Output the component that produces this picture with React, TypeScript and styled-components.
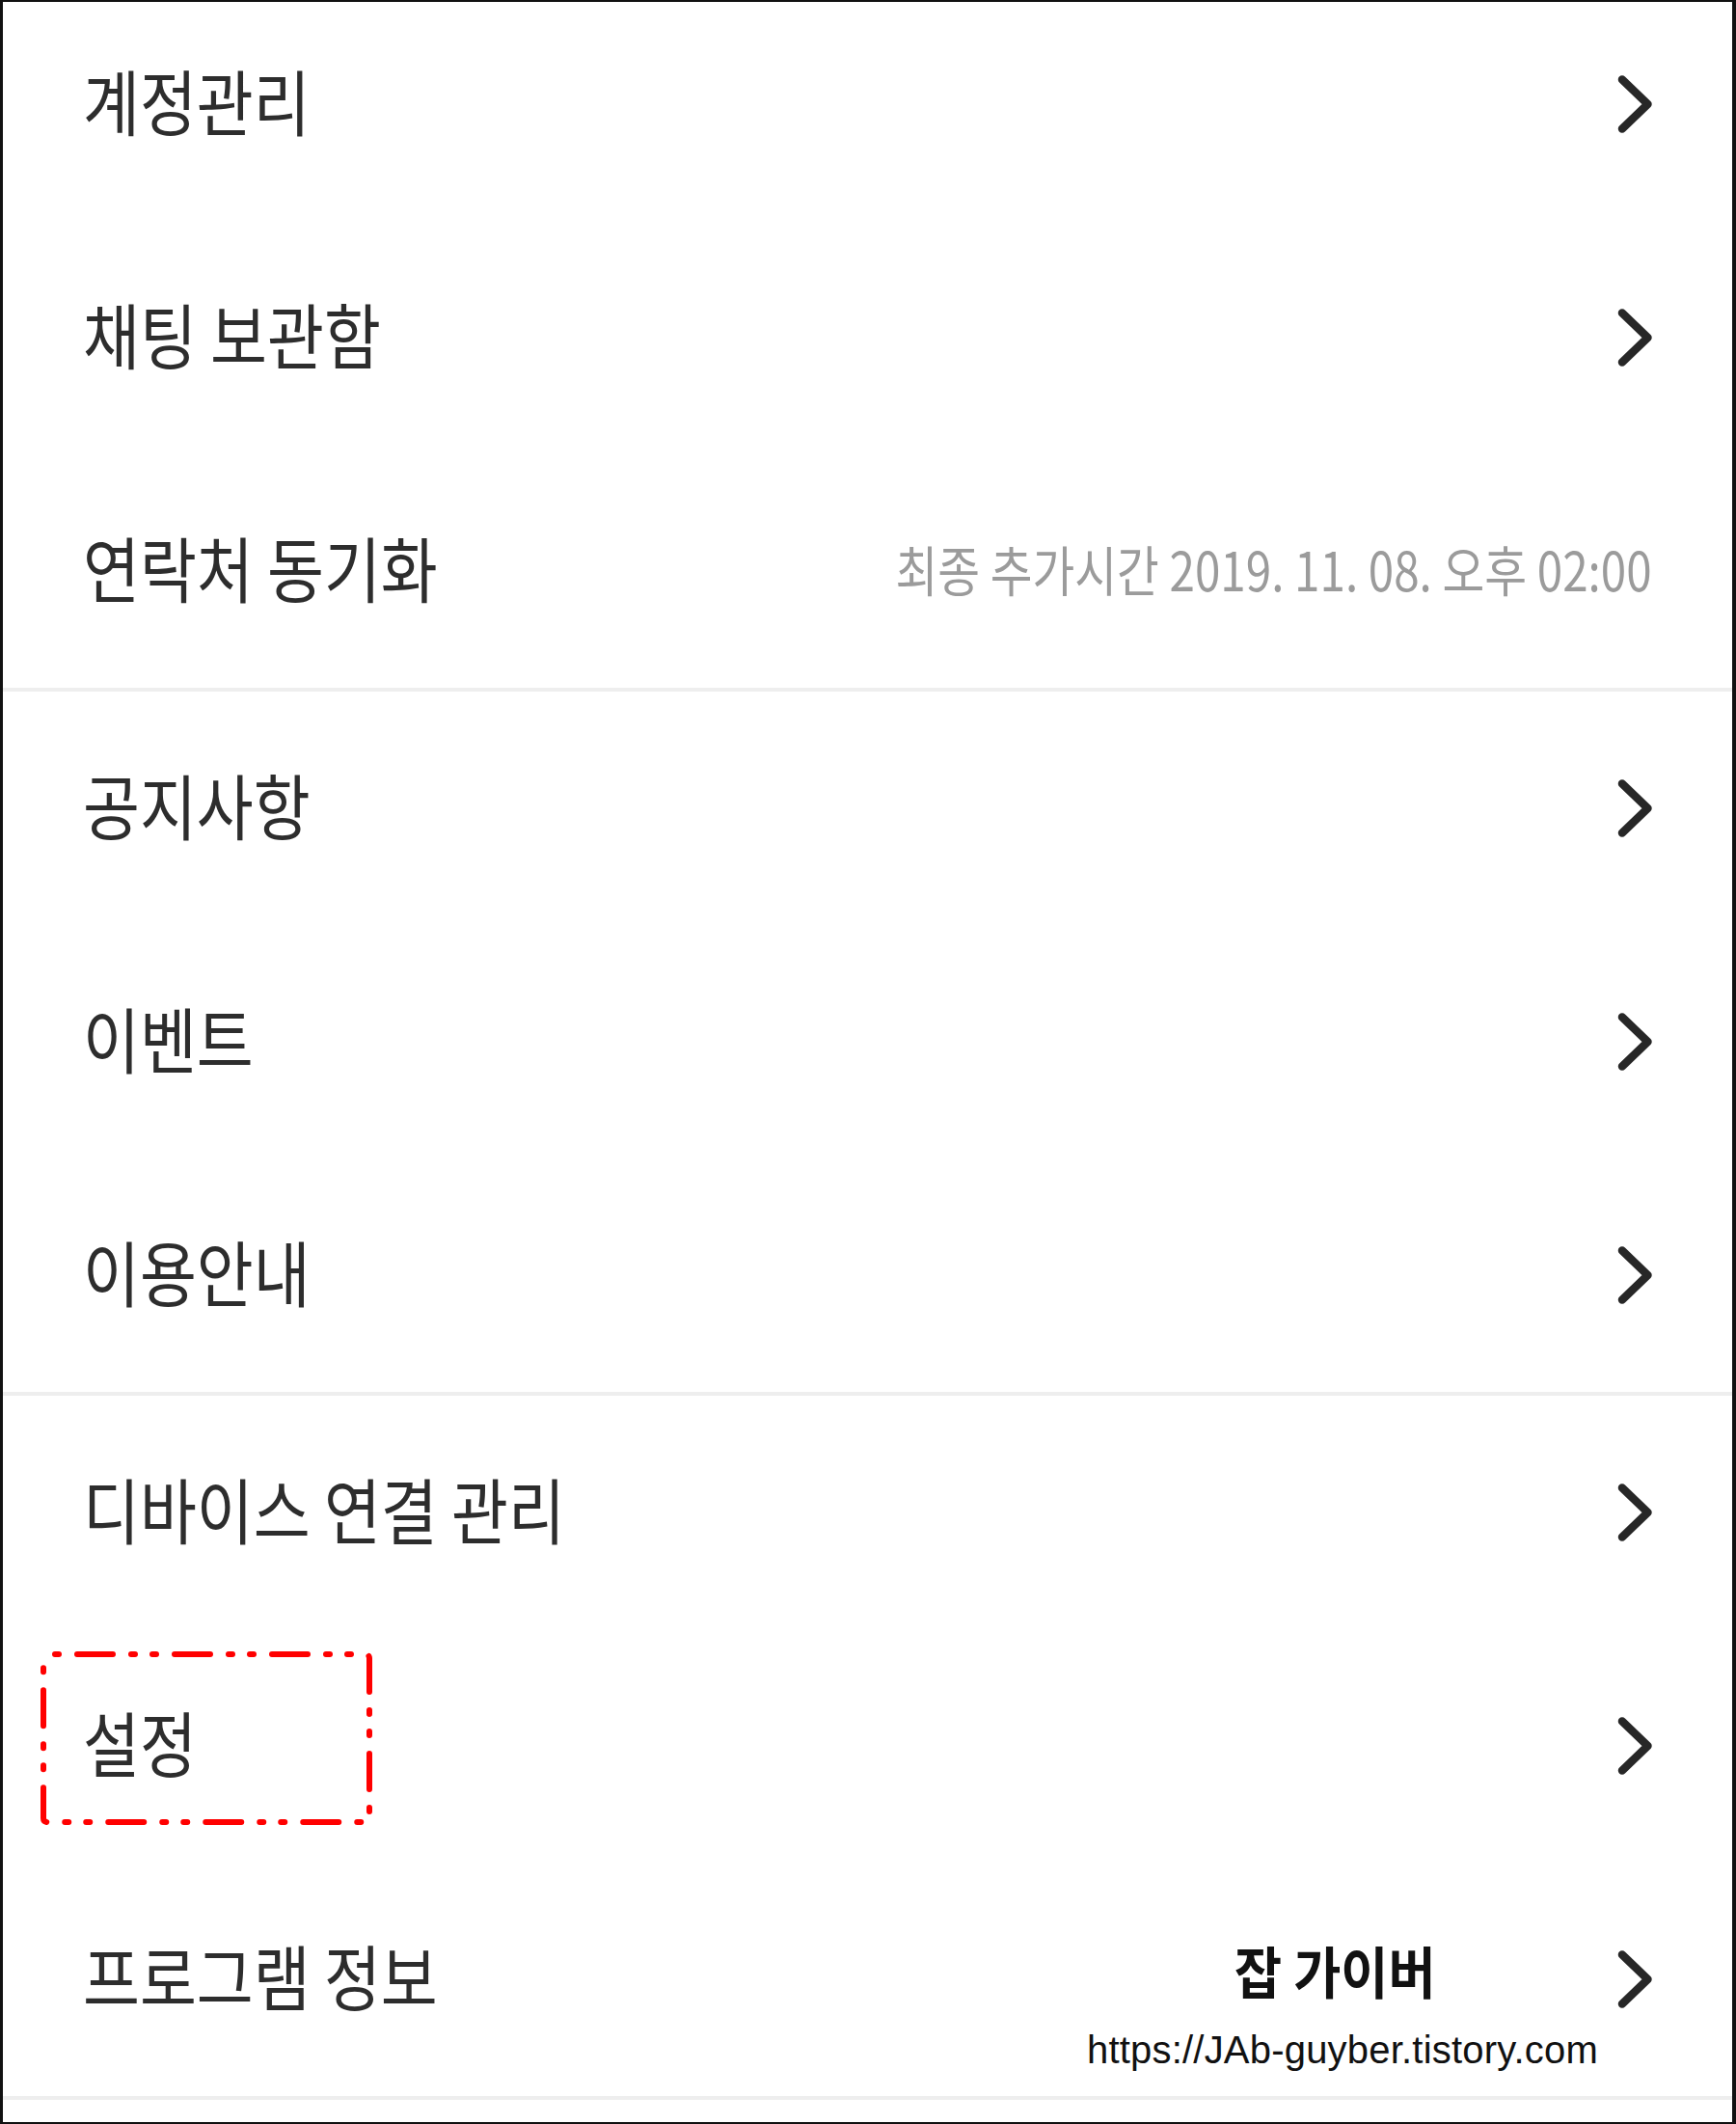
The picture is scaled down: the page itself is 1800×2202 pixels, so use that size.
import styled, { createGlobalStyle } from "styled-components";

type MenuItem = {
  label: string;
  value?: string;
  highlight?: boolean;
  watermark?: boolean;
};

const sections: MenuItem[][] = [
  [
    { label: "계정관리" },
    { label: "채팅 보관함" },
    { label: "연락처 동기화", value: "최종 추가시간 2019. 11. 08. 오후 02:00" },
  ],
  [{ label: "공지사항" }, { label: "이벤트" }, { label: "이용안내" }],
  [
    { label: "디바이스 연결 관리" },
    { label: "설정", highlight: true },
    { label: "프로그램 정보", watermark: true },
  ],
];

const GlobalStyle = createGlobalStyle`
  html, body {
    margin: 0;
    padding: 0;
    background: #ffffff;
  }
  body {
    font-family: "Noto Sans CJK KR", "Noto Sans", sans-serif;
  }
`;

function Chevron() {
  return (
    <ChevronIcon width="36" height="60" viewBox="0 0 36 60">
      <polyline
        points="5,4.5 31.5,30 5,55.5"
        fill="none"
        stroke="#272727"
        strokeWidth="8.5"
        strokeLinecap="round"
        strokeLinejoin="round"
      />
    </ChevronIcon>
  );
}

// dash-dot frame drawn around the highlighted row label
function HighlightBox() {
  return (
    <Highlight width="346" height="182" viewBox="0 0 346 182">
      <rect
        x="4"
        y="4"
        width="338"
        height="174"
        rx="4"
        fill="none"
        stroke="#ff0000"
        strokeWidth="6"
        strokeLinecap="round"
        strokeDasharray="37 19 4 18 4 19"
        strokeDashoffset="70"
      />
    </Highlight>
  );
}

function Row({ item }: { item: MenuItem }) {
  return (
    <RowBox>
      <Label>{item.label}</Label>
      {item.value ? <Value>{item.value}</Value> : <Chevron />}
      {item.highlight && <HighlightBox />}
      {item.watermark && (
        <Watermark>
          <WatermarkTitle>잡 가이버</WatermarkTitle>
          <WatermarkUrl>https://JAb-guyber.tistory.com</WatermarkUrl>
        </Watermark>
      )}
    </RowBox>
  );
}

export default function App() {
  return (
    <>
      <GlobalStyle />
      <Frame>
        <List>
          {sections.map((section, i) => (
            <Section key={i}>
              {section.map((item) => (
                <Row key={item.label} item={item} />
              ))}
            </Section>
          ))}
        </List>
      </Frame>
    </>
  );
}

const Frame = styled.div`
  box-sizing: border-box;
  width: 1800px;
  height: 2202px;
  border-style: solid;
  border-color: #111111;
  border-width: 2px 4px 2px 3px;
  background: #ffffff;
  overflow: hidden;
`;

const List = styled.div`
  display: flex;
  flex-direction: column;
  margin-top: -15px;
`;

const Section = styled.div`
  display: flex;
  flex-direction: column;
  border-bottom: 4px solid #eeeeee;
`;

const RowBox = styled.div`
  position: relative;
  display: flex;
  align-items: center;
  justify-content: space-between;
  height: 242px;
  padding: 0 83px;
`;

const Label = styled.span`
  display: inline-block;
  font-family: "Noto Sans CJK KR", "Noto Sans", sans-serif;
  font-size: 74px;
  line-height: 1;
  color: #2d2d2d;
  white-space: nowrap;
  transform: translateY(-5px) scaleX(0.865);
  transform-origin: left center;
`;

const Value = styled.span`
  display: inline-block;
  font-family: "Noto Sans CJK KR", "Noto Sans", sans-serif;
  font-size: 56px;
  line-height: 1;
  color: #9b9b9b;
  white-space: nowrap;
  transform: translateY(-3px) scaleX(0.85);
  transform-origin: right center;
`;

const ChevronIcon = styled.svg`
  display: block;
  flex-shrink: 0;
`;

const Highlight = styled.svg`
  position: absolute;
  left: 38px;
  top: 22px;
  pointer-events: none;
`;

const Watermark = styled.div`
  position: absolute;
  left: 1124px;
  top: 82px;
  display: flex;
  flex-direction: column;
  align-items: center;
  gap: 34px;
`;

const WatermarkTitle = styled.span`
  display: inline-block;
  margin-right: 16px;
  font-family: "Noto Sans CJK KR", "Noto Sans", sans-serif;
  font-weight: 700;
  font-size: 58px;
  line-height: 1;
  color: #111111;
  transform: scaleX(0.92);
`;

const WatermarkUrl = styled.span`
  font-family: "Liberation Sans", Arial, sans-serif;
  font-size: 40px;
  line-height: 1;
  color: #111111;
  white-space: nowrap;
  letter-spacing: 0.2px;
`;
